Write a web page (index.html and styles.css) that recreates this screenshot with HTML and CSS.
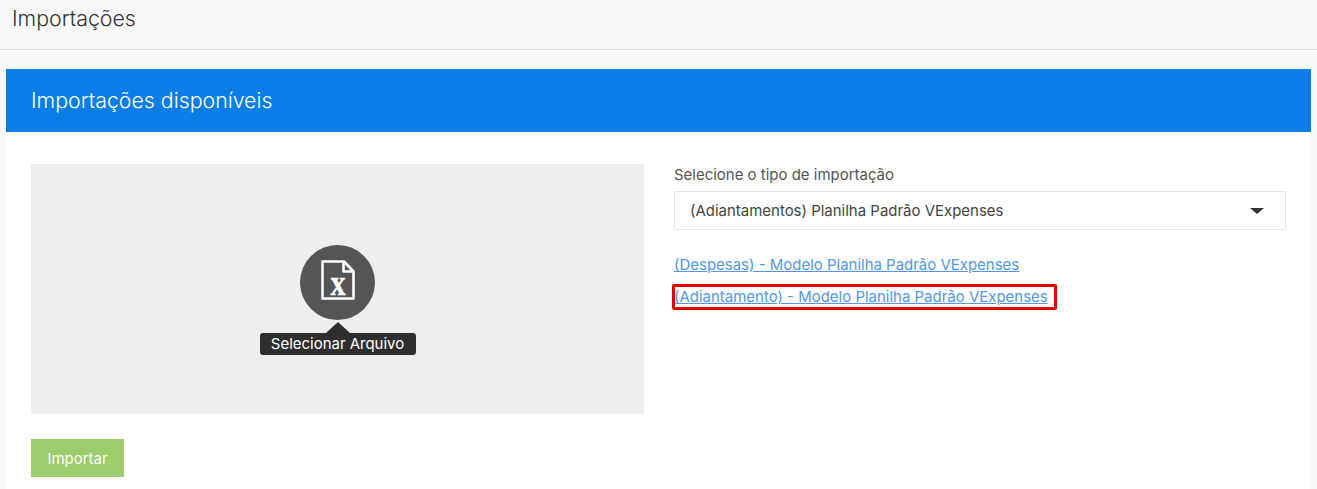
FILE: index.html
```html
<!DOCTYPE html>
<html lang="pt-BR">
<head>
<meta charset="utf-8">
<title>Importações</title>
<link rel="stylesheet" href="styles.css">
</head>
<body>
<header class="page-header"><h1 class="page-title">Importações</h1></header>
<main class="content">
  <section class="panel">
    <div class="panel-heading"><h2 class="panel-title">Importações disponíveis</h2></div>
    <div class="panel-body">
      <div class="columns">
        <div class="dropzone">
          <div class="file-button">
            <svg class="file-icon" width="34" height="44" viewBox="0 0 34 44" aria-hidden="true">
              <path class="file-outline" d="M1.5 1.5H23L32.5 11.5V38.5H1.5Z"/>
              <path class="file-fold" d="M22.5 2V11.5H32"/>
              <text class="file-x" x="17" y="35" text-anchor="middle" textLength="15" lengthAdjust="spacingAndGlyphs">x</text>
            </svg>
            <span class="tooltip">Selecionar Arquivo</span>
          </div>
        </div>
        <div class="options">
          <label class="field-label">Selecione o tipo de importação</label>
          <div class="select">
            <span>(Adiantamentos) Planilha Padrão VExpenses</span>
            <span class="caret"></span>
          </div>
          <ul class="links">
            <li><a href="#">(Despesas) - Modelo Planilha Padrão VExpenses</a></li>
            <li class="highlighted"><a href="#">(Adiantamento) - Modelo Planilha Padrão VExpenses</a></li>
          </ul>
        </div>
      </div>
      <button class="btn-import" type="button">Importar</button>
    </div>
  </section>
</main>
</body>
</html>
```
FILE: styles.css
```css
*, *::before, *::after { box-sizing: border-box; }
html, body { margin: 0; height: 100%; overflow: hidden; }
body {
  background: #f8f8f8;
  font-family: Inter, "Liberation Sans", sans-serif;
  color: #444;
}
.page-header {
  height: 50px;
  border-bottom: 1px solid #e0e0e0;
  padding: 6px 12px 0;
}
.page-title {
  margin: 0;
  font-size: 21.33px;
  line-height: 24px;
  font-weight: 300;
  color: #333;
}
.content { padding: 19px 6px 0; }
.panel { background: #fff; }
.panel-heading {
  height: 63px;
  background: #0b7de6;
  padding: 0 25px 2px;
  display: flex;
  align-items: center;
}
.panel-title {
  margin: 0;
  font-size: 21.33px;
  font-weight: 300;
  color: #fff;
}
.panel-body { padding: 32px 25px 12px; }
.columns { display: flex; gap: 30px; }
.dropzone {
  width: 613px;
  height: 250px;
  flex: none;
  background: #eee;
  display: flex;
  justify-content: center;
  padding-top: 81px;
}
.file-button {
  position: relative;
  width: 75px;
  height: 75px;
  border-radius: 50%;
  background: #555;
  display: flex;
  align-items: center;
  justify-content: center;
}
.file-icon { margin-bottom: 2px; }
.file-outline, .file-fold {
  fill: none;
  stroke: #fff;
  stroke-width: 2.6;
  stroke-linejoin: round;
}
.file-x {
  fill: #fff;
  stroke: #fff;
  stroke-width: 0.4;
  font-family: "Liberation Serif", serif;
  font-weight: 700;
  font-size: 36px;
}
.tooltip {
  position: absolute;
  top: 88px;
  left: 50%;
  transform: translateX(-50%);
  width: 156px;
  height: 22px;
  border-radius: 3px;
  background: #2e2e2e;
  color: #fff;
  font-size: 14.97px;
  line-height: 22px;
  text-align: center;
  white-space: nowrap;
}
.tooltip::before {
  content: "";
  position: absolute;
  top: -11px;
  left: 50%;
  margin-left: -12px;
  border-left: 12px solid transparent;
  border-right: 12px solid transparent;
  border-bottom: 11px solid #2e2e2e;
}
.options { flex: 1; min-width: 0; }
.field-label {
  display: block;
  font-size: 14.97px;
  line-height: 20px;
  color: #555;
  margin: 1px 0 6px;
}
.select {
  height: 39px;
  border: 1px solid #e6e6e6;
  background: #fff;
  padding: 0 15px;
  display: flex;
  align-items: center;
  justify-content: space-between;
  font-size: 14.97px;
  color: #444;
}
.caret {
  margin-right: 6px;
  border-left: 7px solid transparent;
  border-right: 7px solid transparent;
  border-top: 6px solid #333;
}
.links {
  list-style: none;
  margin: 25px 0 0;
  padding: 0;
  font-size: 14.97px;
  line-height: 20px;
}
.links li + li { margin-top: 12px; }
.links a { color: #5298e8; }
.highlighted { position: relative; }
.highlighted::after {
  content: "";
  position: absolute;
  left: -2px;
  top: -3px;
  width: 385px;
  height: 26px;
  border: 3px solid #e00000;
  border-radius: 2px;
}
.btn-import {
  display: block;
  margin-top: 25px;
  width: 93px;
  height: 38px;
  border: 0;
  background: #9ccc6b;
  color: #fff;
  font: 14.97px Inter, "Liberation Sans", sans-serif;
}
```
